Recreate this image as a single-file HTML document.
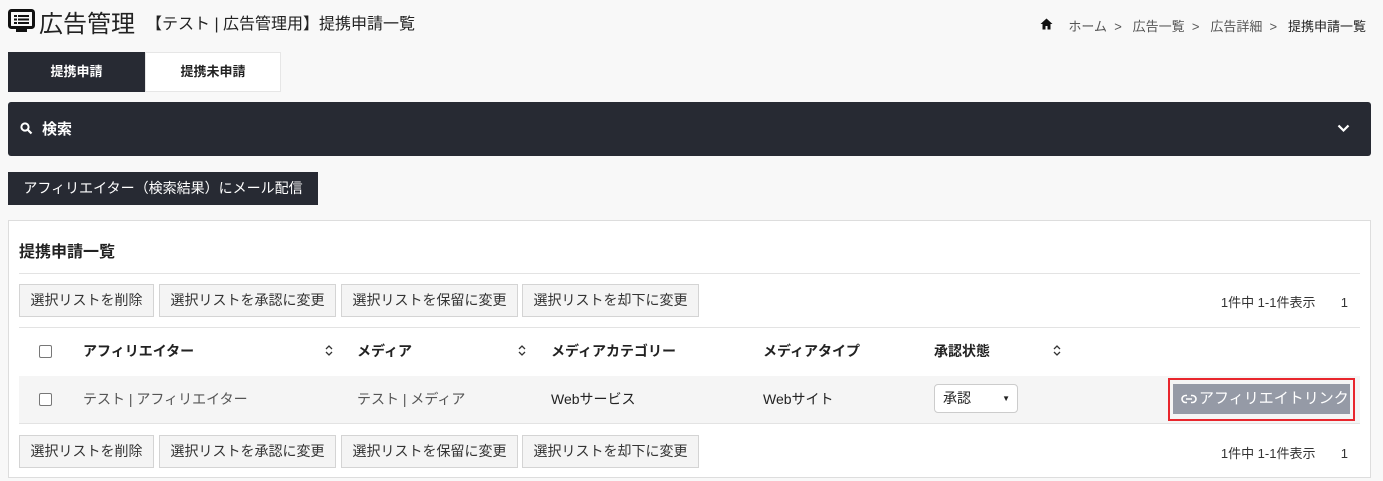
<!DOCTYPE html>
<html><head><meta charset="utf-8"><style>
*{box-sizing:border-box;margin:0;padding:0}
body{width:1383px;height:481px;background:#f8f8f8;font-family:"Liberation Sans","Noto Sans CJK JP",sans-serif;color:#333;position:relative;overflow:hidden;font-size:14px}
.a{position:absolute;white-space:nowrap}
.btn{position:absolute;height:33px;top:0;background:#f4f4f4;border:1px solid #d4d4d4;font-size:14px;line-height:31px;text-align:center;color:#333}
.hr{position:absolute;left:19px;width:1341px;height:1px;background:#e3e3e3}
.cb{position:absolute;width:13px;height:13px;border:1px solid #777;border-radius:2px;background:#fff}
.pg{position:absolute;right:35px;top:8px;font-size:13px}
</style></head><body>
<svg class="a" style="left:8px;top:9px" width="27" height="24" viewBox="0 0 27 24"><rect x="1.5" y="1.5" width="24" height="17" rx="2" fill="none" stroke="#111" stroke-width="3"/><rect x="8" y="19" width="11" height="4" fill="#111"/><rect x="6" y="6" width="3" height="2" fill="#111"/><rect x="10" y="6" width="11" height="2" fill="#111"/><rect x="6" y="9.5" width="3" height="2" fill="#111"/><rect x="10" y="9.5" width="11" height="2" fill="#111"/><rect x="6" y="13" width="3" height="2" fill="#111"/><rect x="10" y="13" width="11" height="2" fill="#111"/></svg>
<div class="a" style="left:39px;top:4px;font-size:24px;color:#222">広告管理</div>
<div class="a" style="left:146px;top:10px;font-size:16px;color:#222">【テスト | 広告管理用】提携申請一覧</div>
<svg class="a" style="left:1040px;top:18px" width="13" height="12" viewBox="0 0 13 12"><path d="M6.5 0.5L0.5 6H2.5V11.5H5.5V8H7.5V11.5H10.5V6H12.5Z" fill="#111"/></svg>
<div class="a" style="right:17px;top:16px;font-size:13px;color:#555">ホーム &nbsp;&gt;&nbsp;&nbsp; 広告一覧 &nbsp;&gt;&nbsp;&nbsp; 広告詳細 &nbsp;&gt;&nbsp;&nbsp; <span style="color:#222">提携申請一覧</span></div>
<div class="a" style="left:8px;top:52px;width:137px;height:40px;background:#272a33;color:#fff;font-weight:bold;font-size:13px;text-align:center;line-height:40px">提携申請</div>
<div class="a" style="left:145px;top:52px;width:136px;height:40px;background:#fff;border:1px solid #e6e6e6;font-weight:bold;font-size:13px;text-align:center;line-height:38px;color:#222">提携未申請</div>
<div class="a" style="left:8px;top:102px;width:1363px;height:54px;background:#272a33;border-radius:3px"></div>
<svg class="a" style="left:20px;top:122px" width="13" height="13" viewBox="0 0 13 13"><circle cx="5" cy="5" r="3.6" fill="none" stroke="#fff" stroke-width="2"/><path d="M7.5 7.5L11.5 11.5" stroke="#fff" stroke-width="2.2"/></svg>
<div class="a" style="left:42px;top:118px;color:#fff;font-weight:bold;font-size:15px">検索</div>
<svg class="a" style="left:1337px;top:124px" width="13" height="9" viewBox="0 0 13 9"><path d="M1.5 1.5L6.5 6.5L11.5 1.5" fill="none" stroke="#fff" stroke-width="2.2"/></svg>
<div class="a" style="left:8px;top:172px;width:310px;height:33px;background:#272a33;color:#fff;font-size:14px;text-align:center;line-height:33px">アフィリエイター（検索結果）にメール配信</div>
<div class="a" style="left:8px;top:220px;width:1363px;height:258px;background:#fff;border:1px solid #ddd"></div>
<div class="a" style="left:19px;top:238px;font-weight:bold;font-size:16px;color:#222">提携申請一覧</div>
<div class="hr" style="top:273px"></div>
<div class="a" style="left:0;top:284px;width:1383px;height:33px">
<div class="btn" style="left:19px;width:135px">選択リストを削除</div><div class="btn" style="left:159px;width:177px">選択リストを承認に変更</div><div class="btn" style="left:341px;width:177px">選択リストを保留に変更</div><div class="btn" style="left:522px;width:177px">選択リストを却下に変更</div>
<div class="pg">1件中 1-1件表示 &nbsp;&nbsp;&nbsp;&nbsp;&nbsp;&nbsp;1</div></div>
<div class="hr" style="top:327px"></div>
<div class="cb" style="left:39px;top:345px"></div>
<div class="a" style="left:83px;top:341px;font-weight:bold;font-size:14px;color:#222">アフィリエイター</div>
<div class="a" style="left:357px;top:341px;font-weight:bold;font-size:14px;color:#222">メディア</div>
<div class="a" style="left:551px;top:341px;font-weight:bold;font-size:14px;color:#222">メディアカテゴリー</div>
<div class="a" style="left:763px;top:341px;font-weight:bold;font-size:14px;color:#222">メディアタイプ</div>
<div class="a" style="left:934px;top:341px;font-weight:bold;font-size:14px;color:#222">承認状態</div>
<svg class="a" style="left:325px;top:344px" width="8" height="13" viewBox="0 0 8 13"><path d="M1 5L4 2L7 5M1 8L4 11L7 8" fill="none" stroke="#333" stroke-width="1.3"/></svg>
<svg class="a" style="left:518px;top:344px" width="8" height="13" viewBox="0 0 8 13"><path d="M1 5L4 2L7 5M1 8L4 11L7 8" fill="none" stroke="#333" stroke-width="1.3"/></svg>
<svg class="a" style="left:1053px;top:344px" width="8" height="13" viewBox="0 0 8 13"><path d="M1 5L4 2L7 5M1 8L4 11L7 8" fill="none" stroke="#333" stroke-width="1.3"/></svg>
<div class="a" style="left:19px;top:376px;width:1341px;height:48px;background:#f5f5f5;border-bottom:1px solid #e3e3e3"></div>
<div class="cb" style="left:39px;top:393px"></div>
<div class="a" style="left:83px;top:389px;color:#555">テスト | アフィリエイター</div>
<div class="a" style="left:357px;top:389px;color:#555">テスト | メディア</div>
<div class="a" style="left:551px;top:389px;color:#222">Webサービス</div>
<div class="a" style="left:763px;top:389px;color:#222">Webサイト</div>
<div class="a" style="left:934px;top:384px;width:84px;height:29px;background:#fff;border:1px solid #ccc;border-radius:4px;line-height:27px;padding-left:8px;color:#222">承認<span style="position:absolute;right:7px;top:0;font-size:8px">▼</span></div>
<div class="a" style="left:1168px;top:378px;width:187px;height:43px;border:2px solid #e8262d"></div>
<div class="a" style="left:1173px;top:384px;width:177px;height:30px;background:#959aa6;color:#fff;font-size:15px;line-height:30px;padding-left:26px">アフィリエイトリンク</div>
<svg class="a" style="left:1181px;top:394px" width="16" height="10" viewBox="0 0 16 10"><path d="M6 1.5H4.5a3.5 3.5 0 0 0 0 7H6M10 1.5h1.5a3.5 3.5 0 0 1 0 7H10M5 5h6" fill="none" stroke="#fff" stroke-width="1.6"/></svg>
<div class="a" style="left:0;top:435px;width:1383px;height:33px">
<div class="btn" style="left:19px;width:135px">選択リストを削除</div><div class="btn" style="left:159px;width:177px">選択リストを承認に変更</div><div class="btn" style="left:341px;width:177px">選択リストを保留に変更</div><div class="btn" style="left:522px;width:177px">選択リストを却下に変更</div>
<div class="pg">1件中 1-1件表示 &nbsp;&nbsp;&nbsp;&nbsp;&nbsp;&nbsp;1</div></div>
</body></html>
